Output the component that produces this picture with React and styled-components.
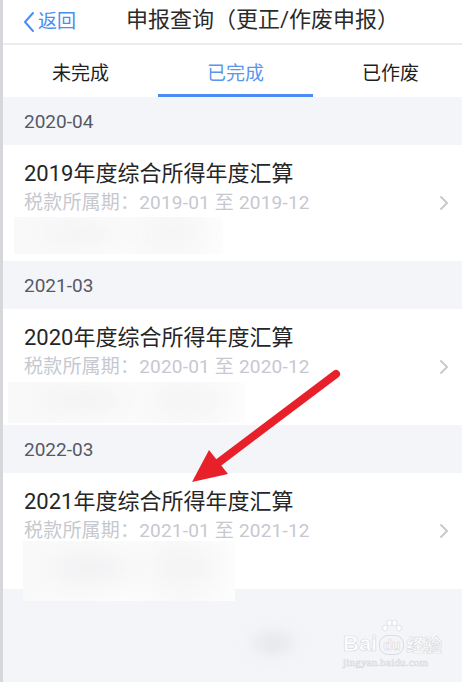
import React from 'react';
import styled, { createGlobalStyle } from 'styled-components';

const GlobalStyle = createGlobalStyle`
  html, body {
    margin: 0;
    padding: 0;
    height: 682px;
    overflow: hidden;
    background: #f4f5f9;
  }
  #root {
    height: 682px;
  }
`;

const Page = styled.div`
  position: relative;
  width: 465px;
  height: 682px;
  border-left: 3px solid #d6d7da;
  background: #f4f5f9;
  display: flex;
  flex-direction: column;
  font-family: Roboto, 'Noto Sans CJK SC', sans-serif;
`;

const Header = styled.div`
  height: 43px;
  background: #fff;
  border-bottom: 2px solid #ececee;
  display: flex;
  align-items: center;
  padding-left: 20px;
`;

const Back = styled.div`
  display: flex;
  align-items: center;
  gap: 3px;
  color: #4a8ef2;
  font-size: 19px;
  line-height: 24px;
`;

const Title = styled.div`
  margin-left: 50px;
  font-size: 22px;
  line-height: 28px;
  color: #2b2b2b;
  margin-top: -4px;
`;

const Tabs = styled.div`
  height: 52px;
  background: #fff;
  display: grid;
  grid-template-columns: repeat(3, 155px);
`;

const Tab = styled.div`
  display: flex;
  align-items: center;
  justify-content: center;
  font-size: 19px;
  color: ${({ $active }) => ($active ? '#5b96ee' : '#1f1f1f')};
  border-bottom: 3px solid ${({ $active }) => ($active ? '#4a8bf5' : 'transparent')};
  padding-top: 3px;
`;

const DateHeader = styled.div`
  height: 48px;
  display: flex;
  align-items: center;
  padding-left: 21px;
  font-size: 19px;
  color: #555966;
`;

const Card = styled.div`
  position: relative;
  height: 116px;
  background: #fff;
  display: flex;
  align-items: flex-start;
  padding: 0 19px 0 21px;
`;

const CardText = styled.div`
  flex: 1;
  display: flex;
  flex-direction: column;
  padding-top: 16px;
`;

const CardTitle = styled.div`
  font-size: 22px;
  line-height: 26px;
  color: #262626;
`;

const Period = styled.div`
  margin-top: 4px;
  font-size: 19px;
  line-height: 24px;
  letter-spacing: 0.2px;
  color: #c6c8d0;
`;

const Chevron = styled.svg`
  margin-top: 50px;
  flex-shrink: 0;
`;

const Mask = styled.div`
  position: absolute;
  background: linear-gradient(90deg, #f9f9fa 0%, #fcfcfc 45%, #f9f9fa 75%, #fdfdfd 100%);
  overflow: hidden;
  &::before {
    content: '';
    position: absolute;
    left: 12%;
    top: 20%;
    width: 40%;
    height: 50%;
    border-radius: 50%;
    background: #f1f1f3;
    filter: blur(12px);
  }
  &::after {
    content: '';
    position: absolute;
    left: 60%;
    top: 20%;
    width: 32%;
    height: 50%;
    border-radius: 50%;
    background: #f3f3f4;
    filter: blur(12px);
  }
`;

const Footer = styled.div`
  flex: 1;
  display: flex;
  align-items: flex-start;
  padding: 36px 0 0 242px;
  gap: 42px;
`;

const Smudge = styled.div`
  width: 56px;
  height: 36px;
  border-radius: 50%;
  background: radial-gradient(ellipse at center, #e6e7eb 0%, #eceef2 45%, #f4f5f9 75%);
  filter: blur(4px);
`;

const Watermark = styled.div`
  display: flex;
  flex-direction: column;
  align-items: flex-start;
  color: #ffffff;
  -webkit-text-stroke: 0.7px #dadce2;
  margin-top: -6px;
`;

const MarkRow = styled.div`
  display: flex;
  align-items: flex-end;
`;

const MarkBai = styled.span`
  font-family: 'Liberation Sans', Arial, sans-serif;
  font-weight: bold;
  font-size: 22px;
  line-height: 22px;
`;

const MarkDu = styled.div`
  display: flex;
  flex-direction: column;
  align-items: center;
  margin: 0 2px;
`;

const DuBadge = styled.span`
  font-family: 'Liberation Sans', Arial, sans-serif;
  font-weight: bold;
  font-size: 14px;
  line-height: 18px;
  padding: 0 3px;
  border: 1.5px solid #dadce2;
  border-radius: 9px;
`;

const MarkJy = styled.span`
  font-family: 'Noto Sans CJK SC', sans-serif;
  font-size: 18px;
  line-height: 22px;
  font-weight: bold;
`;

const MarkUrl = styled.span`
  font-family: 'Liberation Serif', serif;
  font-size: 11px;
  line-height: 12px;
  margin-top: 1px;
  letter-spacing: 0.2px;
`;

const Arrow = styled.svg`
  position: absolute;
  left: -3px;
  top: 0;
  pointer-events: none;
`;

const items = [
  { date: '2020-04', year: '2019', mask: { left: 11, top: 72, width: 209, height: 37 } },
  { date: '2021-03', year: '2020', mask: { left: 5, top: 73, width: 237, height: 41 } },
  { date: '2022-03', year: '2021', mask: { left: 20, top: 68, width: 212, height: 60 } },
];

const App = () => {
  return (
    <>
      <GlobalStyle />
      <Page>
        <Header>
          <Back>
            <svg width="12" height="22" viewBox="0 0 12 22">
              <path d="M10 2 L2 11 L10 20" fill="none" stroke="#4a8ef2" strokeWidth="2" strokeLinecap="round" strokeLinejoin="round" />
            </svg>
            返回
          </Back>
          <Title>申报查询（更正/作废申报）</Title>
        </Header>
        <Tabs>
          <Tab>未完成</Tab>
          <Tab $active>已完成</Tab>
          <Tab>已作废</Tab>
        </Tabs>
        {items.map((it) => (
          <React.Fragment key={it.date}>
            <DateHeader>{it.date}</DateHeader>
            <Card>
              <CardText>
                <CardTitle>{it.year}年度综合所得年度汇算</CardTitle>
                <Period>税款所属期：{it.year}-01 至 {it.year}-12</Period>
              </CardText>
              <Chevron width="10" height="16" viewBox="0 0 10 16">
                <path d="M2 2 L8 8 L2 14" fill="none" stroke="#c9cad0" strokeWidth="2" strokeLinecap="round" strokeLinejoin="round" />
              </Chevron>
              <Mask style={it.mask} />
            </Card>
          </React.Fragment>
        ))}
        <Footer>
          <Smudge />
          <Watermark>
            <MarkRow>
              <MarkBai>Bai</MarkBai>
              <MarkDu>
                <svg width="22" height="16" viewBox="0 0 22 16">
                  <g fill="#fff" stroke="#dadce2" strokeWidth="0.8">
                    <ellipse cx="4" cy="9" rx="2.5" ry="3" />
                    <ellipse cx="8.5" cy="4" rx="2.5" ry="3" />
                    <ellipse cx="13.5" cy="4" rx="2.5" ry="3" />
                    <ellipse cx="18" cy="9" rx="2.5" ry="3" />
                  </g>
                </svg>
                <DuBadge>du</DuBadge>
              </MarkDu>
              <MarkJy>经验</MarkJy>
            </MarkRow>
            <MarkUrl>jingyan.baidu.com</MarkUrl>
          </Watermark>
        </Footer>
        <Arrow width="465" height="682" viewBox="0 0 465 682">
          <line x1="336" y1="374" x2="214" y2="466" stroke="#e8202a" strokeWidth="8" strokeLinecap="round" />
          <polygon points="192,482 209,450 228,474" fill="#e8202a" />
        </Arrow>
      </Page>
    </>
  );
};

export default App;
